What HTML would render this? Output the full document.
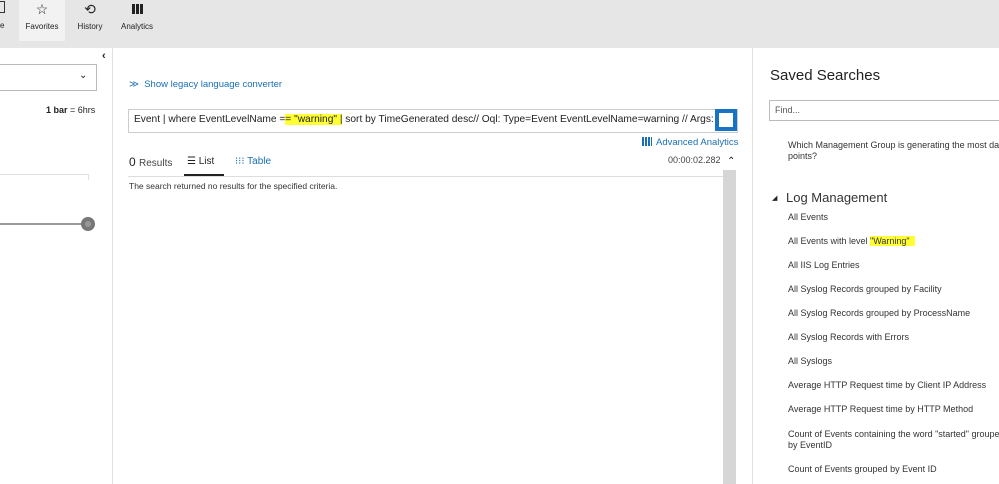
<!DOCTYPE html>
<html><head><style>
body{margin:0;width:999px;height:484px;overflow:hidden;background:#fff;font-family:"Liberation Sans",sans-serif;position:relative;color:#222}
.a{position:absolute;white-space:nowrap}
.top{left:0;top:0;width:999px;height:48px;background:#e6e6e6}
.tab{top:0;height:41px;font-size:8px;text-align:center;color:#222}
.s{font-size:9px;color:#333}
.hl{background:#ffff33}
</style></head><body>
<div class="a top"></div>
<div class="a tab" style="left:19px;width:46px;background:#f2f2f2"><div style="font-size:14px;margin-top:1px">☆</div><div style="margin-top:4px">Favorites</div></div>
<div class="a tab" style="left:70px;width:40px"><div style="font-size:14px;margin-top:1px">⟲</div><div style="margin-top:4px">History</div></div>
<div class="a tab" style="left:116px;width:42px"><div style="margin:4px auto 0;width:11px;height:10px;background:repeating-linear-gradient(90deg,#222 0 3px,transparent 3px 4px)"></div><div style="margin-top:8px">Analytics</div></div>
<div class="a" style="left:0;top:21px;font-size:8px">e</div>
<div class="a" style="left:0;top:1px;width:4px;height:10px;border:1px solid #333;border-left:none"></div>
<!-- left panel -->
<div class="a" style="left:112px;top:48px;width:1px;height:436px;background:#e0e0e0"></div>
<div class="a" style="left:102px;top:50px;font-size:11px;font-weight:bold">‹</div>
<div class="a" style="left:-2px;top:64px;width:97px;height:25px;border:1px solid #bbb"></div>
<div class="a" style="left:79px;top:70px;font-size:10px">⌄</div>
<div class="a" style="left:46px;top:105px;font-size:9px"><b>1 bar</b> = 6hrs</div>
<div class="a" style="left:0;top:174px;width:88px;height:1px;background:#e0e0e0"></div>
<div class="a" style="left:88px;top:174px;width:1px;height:6px;background:#e0e0e0"></div>
<div class="a" style="left:0;top:223px;width:85px;height:2px;background:#999"></div>
<div class="a" style="left:81px;top:217px;width:14px;height:14px;border-radius:50%;background:#777"></div>
<div class="a" style="left:85px;top:221px;width:6px;height:6px;border-radius:50%;background:#999"></div>
<!-- middle -->
<div class="a" style="left:129px;top:79px;font-size:9.5px;color:#1a6fb5">≫&nbsp; Show legacy language converter</div>
<div class="a" style="left:128px;top:109px;width:608px;height:22px;border:1px solid #ccc"></div>
<div class="a" style="left:134px;top:114px;font-size:10.2px">Event | where EventLevelName =<span class="hl">= "warning" |</span> sort by TimeGenerated desc// Oql: Type=Event EventLevelName=warning // Args:</div>
<div class="a" style="left:715px;top:109px;width:22px;height:22px;background:#1774c4"></div>
<div class="a" style="left:719px;top:113px;width:12px;height:12px;border:1px solid #fff;background:#fff"></div>
<div class="a" style="left:642px;top:137px;width:10px;height:9px;background:repeating-linear-gradient(90deg,#1a6fb5 0 2px,transparent 2px 3px)"></div>
<div class="a" style="left:656px;top:137px;font-size:9.5px;color:#1a6fb5">Advanced Analytics</div>
<div class="a" style="left:668px;top:155px;font-size:9px;color:#444">00:00:02.282</div>
<div class="a" style="left:727px;top:156px;font-size:10px">⌃</div>
<div class="a" style="left:723px;top:170px;width:13px;height:314px;background:#d6d6d6"></div>
<div class="a" style="left:129px;top:155px;font-size:12px">0 <span style="font-size:10px;color:#444">Results</span></div>
<div class="a" style="left:187px;top:156px;font-size:10px">☰ List</div>
<div class="a" style="left:184px;top:174px;width:40px;height:2px;background:#222"></div>
<div class="a" style="left:235px;top:156px;font-size:10px;color:#1a6fb5">⁝⁝⁝ Table</div>
<div class="a" style="left:128px;top:176px;width:595px;height:1px;background:#ddd"></div>
<div class="a" style="left:129px;top:181px;font-size:8.5px;color:#333">The search returned no results for the specified criteria.</div>
<div class="a" style="left:752px;top:48px;width:1px;height:436px;background:#e0e0e0"></div>
<!-- right -->
<div class="a" style="left:770px;top:67px;font-size:15px;color:#222">Saved Searches</div>
<div class="a" style="left:769px;top:100px;width:240px;height:19px;border:1px solid #bbb"></div>
<div class="a" style="left:775px;top:105px;font-size:9px;color:#555">Find...</div>
<div class="a s" style="left:788px;top:140px;line-height:11px">Which Management Group is generating the most data<br>points?</div>
<div class="a" style="left:772px;top:194px;font-size:7px">◢</div>
<div class="a" style="left:786px;top:190px;font-size:13px;color:#333">Log Management</div>
<div class="a s" style="left:788px;top:212px">All Events</div>
<div class="a s" style="left:788px;top:236px">All Events with level <span class="hl">"Warning"&nbsp;&nbsp;</span></div>
<div class="a s" style="left:788px;top:260px">All IIS Log Entries</div>
<div class="a s" style="left:788px;top:284px">All Syslog Records grouped by Facility</div>
<div class="a s" style="left:788px;top:308px">All Syslog Records grouped by ProcessName</div>
<div class="a s" style="left:788px;top:332px">All Syslog Records with Errors</div>
<div class="a s" style="left:788px;top:356px">All Syslogs</div>
<div class="a s" style="left:788px;top:380px">Average HTTP Request time by Client IP Address</div>
<div class="a s" style="left:788px;top:404px">Average HTTP Request time by HTTP Method</div>
<div class="a s" style="left:788px;top:429px;line-height:11px">Count of Events containing the word "started" grouped<br>by EventID</div>
<div class="a s" style="left:788px;top:464px">Count of Events grouped by Event ID</div>
</body></html>
